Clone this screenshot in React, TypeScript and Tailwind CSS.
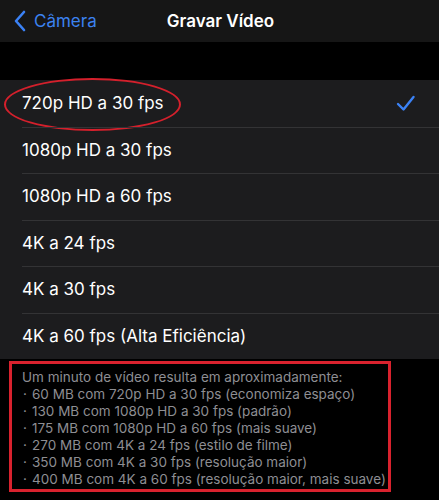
import React from "react";

const rows = [
  "720p HD a 30 fps",
  "1080p HD a 30 fps",
  "1080p HD a 60 fps",
  "4K a 24 fps",
  "4K a 30 fps",
  "4K a 60 fps (Alta Eficiência)",
];

const notes = [
  "60 MB com 720p HD a 30 fps (economiza espaço)",
  "130 MB com 1080p HD a 30 fps (padrão)",
  "175 MB com 1080p HD a 60 fps (mais suave)",
  "270 MB com 4K a 24 fps (estilo de filme)",
  "350 MB com 4K a 30 fps (resolução maior)",
  "400 MB com 4K a 60 fps (resolução maior, mais suave)",
];

export default function App() {
  return (
    <div
      className="w-[439px] h-[500px] bg-black overflow-hidden"
      style={{ fontFamily: "Inter, 'Liberation Sans', sans-serif" }}
    >
      <div className="h-[42px] bg-[#161616] flex items-center relative">
        <div className="flex items-center pl-[13px] text-[#3b82f6]">
          <svg width="14" height="22" viewBox="0 0 14 22" fill="none">
            <path d="M11 2 L3 11 L11 20" stroke="#3b82f6" strokeWidth="2.6" strokeLinecap="round" strokeLinejoin="round" />
          </svg>
          <span className="ml-[7px] text-[17px] text-[#3c82f0] leading-none">Câmera</span>
        </div>
        <div className="absolute left-0 right-0 top-0 h-full flex items-center justify-center pointer-events-none">
          <span className="text-[17px] font-semibold text-white leading-none ml-[2px]">Gravar Vídeo</span>
        </div>
      </div>
      <div className="h-[38px] bg-black" />
      <div className="bg-[#1c1c1e]">
        {rows.map((r, i) => (
          <div key={r} className="relative h-[46.5px] pl-[22px] flex items-center">
            {i > 0 && <div className="absolute top-0 left-[22px] right-0 h-px bg-[#333335]" />}
            <span className="text-[17px] text-white pt-[1px]">{r}</span>
            {i === 0 && (
              <>
                <svg className="absolute left-[396px] top-[15px]" width="20" height="17" viewBox="0 0 20 17" fill="none">
                  <path d="M2 9 L7.5 14.5 L17.5 2" stroke="#3b82f6" strokeWidth="2.4" strokeLinecap="round" strokeLinejoin="round" />
                </svg>
                <div className="absolute left-[4px] top-[-2px] w-[177px] h-[53px] rounded-[50%] border-2 border-[#d4202c]" />
              </>
            )}
          </div>
        ))}
      </div>
      <div className="relative pl-[22px] pt-[8px]">
        <div className="absolute left-[9px] top-[2px] w-[382px] h-[131px] border-[3px] border-[#d9222e]" />
        <div className="text-[13.5px] leading-[17px] text-[#8e8e93] pt-[2px]">
          <div>Um minuto de vídeo resulta em aproximadamente:</div>
          {notes.map((n) => (
            <div key={n} className="flex">
              <span className="w-[10px] pl-[1px]">·</span>
              <span>{n}</span>
            </div>
          ))}
        </div>
      </div>
    </div>
  );
}
